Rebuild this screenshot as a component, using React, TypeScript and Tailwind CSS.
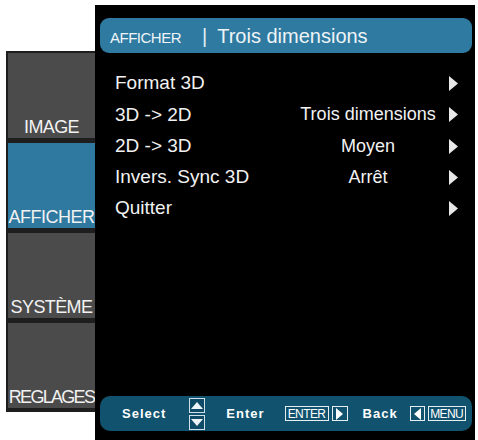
import React from "react";

const font = { fontFamily: '"Liberation Sans", Arial, sans-serif' };

function Tri({ dir = "right", className = "" }: { dir?: "right" | "left" | "up" | "down"; className?: string }) {
  const pts: Record<string, string> = {
    right: "0,0 8,7 0,14",
    left: "8,0 0,7 8,14",
    up: "0,8 7,0 14,8",
    down: "0,0 14,0 7,8",
  };
  const vb = dir === "up" || dir === "down" ? "0 0 14 8" : "0 0 8 14";
  return (
    <svg viewBox={vb} className={className} preserveAspectRatio="none">
      <polygon points={pts[dir]} fill="currentColor" />
    </svg>
  );
}

const rows = [
  { label: "Format 3D", value: "" },
  { label: "3D -> 2D", value: "Trois dimensions" },
  { label: "2D -> 3D", value: "Moyen" },
  { label: "Invers. Sync 3D", value: "Arrêt" },
  { label: "Quitter", value: "" },
];

const side = [
  { label: "IMAGE", active: false, track: "tracking-[-0.6px]" },
  { label: "AFFICHER", active: true, track: "tracking-[-0.5px]" },
  { label: "SYSTÈME", active: false, track: "tracking-[-0.6px]" },
  { label: "REGLAGES", active: false, track: "tracking-[-1.7px]" },
];

export default function App() {
  return (
    <div className="w-[478px] h-[440px] bg-white flex overflow-hidden" style={font}>
      {/* Sidebar */}
      <div className="ml-[6px] mt-[51px] w-[89px] h-[361px] bg-[#1e1e1e] pl-[2px] pt-[2px] pb-[4px] flex flex-col gap-[5px]">
        {side.map((s) => (
          <div
            key={s.label}
            className={`h-[85px] flex items-end justify-center pb-[2px] text-[18px] leading-none text-[#f2f2f2] whitespace-nowrap ${s.track} ${
              s.active ? "bg-[#2f79a0]" : "bg-[#4b4b4b]"
            }`}
          >
            {s.label}
          </div>
        ))}
      </div>

      {/* Main panel */}
      <div className="mt-[5px] w-[380px] h-[435px] bg-black flex flex-col pl-[5px] pr-[3px]">
        <div className="mt-[13px] h-[35px] rounded-[9px] bg-[#2f7aa0] flex items-center pl-[10px] text-[#eef4f7]">
          <div className="flex items-baseline">
            <span className="text-[15px] tracking-[-0.5px]">AFFICHER</span>
            <span className="ml-[21px] text-[20px] text-[#e3eef3]">|</span>
            <span className="ml-[10px] text-[20px]">Trois dimensions</span>
          </div>
        </div>

        <div className="mt-[15px] flex flex-col">
          {rows.map((r) => (
            <div key={r.label} className="flex items-center h-[31.25px] pl-[15px] text-[19px] text-[#f2f2f2]">
              <div className="w-[181px] whitespace-nowrap">{r.label}</div>
              <div className="w-[144px] text-center whitespace-nowrap text-[18px]">{r.value}</div>
              <div className="ml-[9px] w-[9px] flex items-center text-[#e8e8e8]">
                <Tri dir="right" className="w-[9px] h-[15px]" />
              </div>
            </div>
          ))}
        </div>

        <div className="mt-auto mb-[9px] h-[35px] rounded-[10px] bg-[#11526e] flex items-center text-white text-[13px] font-bold tracking-[1px]">
          <span className="ml-[22px]">Select</span>
          <div className="ml-[23px] flex flex-col gap-[2px] h-[34px] justify-center">
            <div className="w-[16px] h-[15px] border border-[#cfe0ea] flex items-center justify-center bg-[#0f4b66]">
              <Tri dir="up" className="w-[12px] h-[7px] text-[#eef4f7]" />
            </div>
            <div className="w-[16px] h-[15px] border border-[#cfe0ea] flex items-center justify-center bg-[#0f4b66]">
              <Tri dir="down" className="w-[12px] h-[7px] text-[#eef4f7]" />
            </div>
          </div>
          <span className="ml-[21px]">Enter</span>
          <div className="ml-[20px] h-[15px] w-[44px] border border-[#e6eef2] flex items-center justify-center text-[12px] font-normal tracking-[-0.6px] leading-none">
            ENTER
          </div>
          <div className="ml-[3px] h-[15px] w-[16px] border border-[#e6eef2] flex items-center justify-center">
            <Tri dir="right" className="w-[7px] h-[12px]" />
          </div>
          <span className="ml-[15px]">Back</span>
          <div className="ml-[12px] h-[15px] w-[15px] border border-[#e6eef2] flex items-center justify-center">
            <Tri dir="left" className="w-[7px] h-[12px]" />
          </div>
          <div className="ml-[3px] h-[15px] w-[38px] border border-[#e6eef2] flex items-center justify-center text-[12px] font-normal tracking-[-0.6px] leading-none">
            MENU
          </div>
        </div>
      </div>
    </div>
  );
}
